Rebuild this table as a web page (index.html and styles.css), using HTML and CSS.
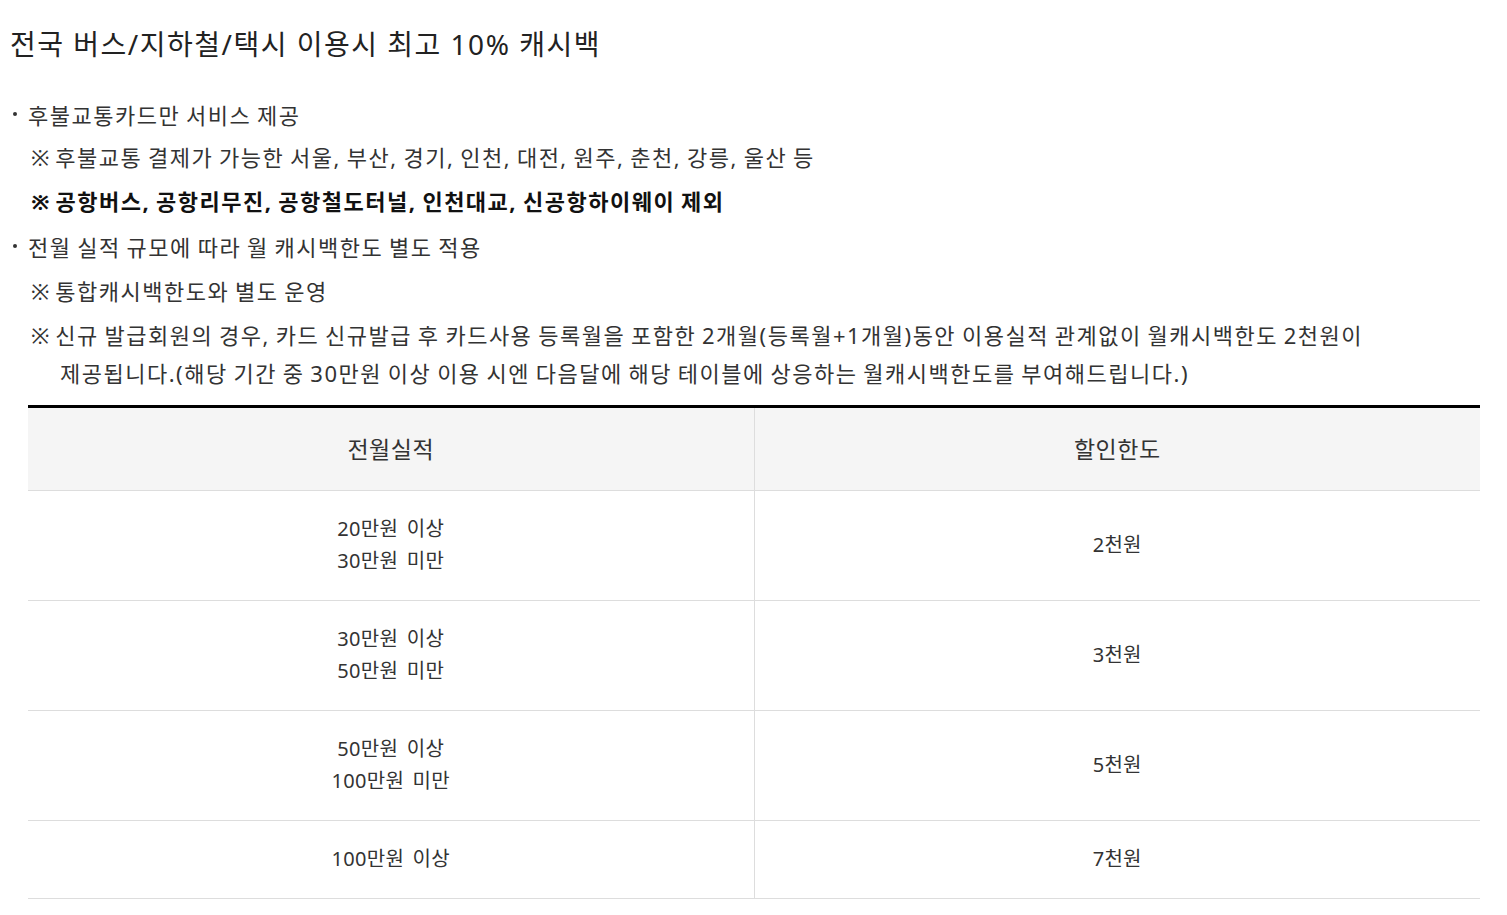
FILE: index.html
```html
<!DOCTYPE html>
<html lang="ko">
<head>
<meta charset="utf-8">
<link rel="stylesheet" href="styles.css">
</head>
<body>
<div class="page">
  <h2 class="title">전국 버스/지하철/택시 이용시 최고 10% 캐시백</h2>
  <ul class="list">
    <li class="item">
      <p class="line bullet first">후불교통카드만 서비스 제공</p>
      <p class="line note"><span class="mark">※</span> 후불교통 결제가 가능한 서울, 부산, 경기, 인천, 대전, 원주, 춘천, 강릉, 울산 등</p>
      <p class="line note strong"><span class="mark">※</span> 공항버스, 공항리무진, 공항철도터널, 인천대교, 신공항하이웨이 제외</p>
    </li>
    <li class="item next">
      <p class="line bullet">전월 실적 규모에 따라 월 캐시백한도 별도 적용</p>
      <p class="line note"><span class="mark">※</span> 통합캐시백한도와 별도 운영</p>
      <p class="line note hang"><span class="mark">※</span> 신규 발급회원의 경우, 카드 신규발급 후 카드사용 등록월을 포함한 2개월(등록월+1개월)동안 이용실적 관계없이 월캐시백한도 2천원이<br>제공됩니다.(해당 기간 중 30만원 이상 이용 시엔 다음달에 해당 테이블에 상응하는 월캐시백한도를 부여해드립니다.)</p>
    </li>
  </ul>
  <table class="tbl">
    <thead>
      <tr><th>전월실적</th><th>할인한도</th></tr>
    </thead>
    <tbody>
      <tr><td>20만원 이상<br>30만원 미만</td><td>2천원</td></tr>
      <tr><td>30만원 이상<br>50만원 미만</td><td>3천원</td></tr>
      <tr><td>50만원 이상<br>100만원 미만</td><td>5천원</td></tr>
      <tr><td>100만원 이상</td><td>7천원</td></tr>
    </tbody>
  </table>
</div>
</body>
</html>
```

FILE: styles.css
```css
* { box-sizing: border-box; }
html, body { margin: 0; padding: 0; background: #fff; }
body {
  font-family: "Noto Sans", "Noto Sans CJK KR", sans-serif;
  color: #333;
}
.page { padding: 26px 27px 0 10px; }
.title {
  margin: 0;
  font-size: 28px;
  font-weight: 400;
  line-height: 36px;
  color: #222;
  letter-spacing: 1.5px;
  word-spacing: 0;
}
.list { list-style: none; margin: 34px 0 0 0; padding: 0; }
.item { margin: 0; }
.item.next { margin-top: 8px; }
.line {
  margin: 0;
  font-size: 22px;
  line-height: 38px;
  letter-spacing: 1.5px;
  word-spacing: -1.4px;
  padding-left: 18px;
  position: relative;
  margin-bottom: 6px;
}
.line.first { margin-bottom: 4px; }
.bullet::before {
  content: "";
  position: absolute;
  left: 3px;
  top: 16px;
  width: 4px;
  height: 4px;
  border-radius: 50%;
  background: #333;
}
.note { padding-left: 21px; }
.mark { letter-spacing: 0; }
.strong { font-weight: 700; color: #111; letter-spacing: 1.5px; }
.hang { padding-left: 50px; text-indent: -29px; }
.tbl {
  margin: 13px 0 0 18px;
  width: calc(100% - 18px);
  border-collapse: collapse;
  table-layout: fixed;
  border-top: 3px solid #000;
}
.tbl th, .tbl td {
  font-size: 20px;
  font-weight: 400;
  line-height: 32px;
  letter-spacing: 0.3px;
  word-spacing: 3px;
  text-align: center;
  color: #333;
  border-bottom: 1px solid #ddd;
  border-left: 1px solid #ddd;
  padding: 22px 0 23px;
}
.tbl th { background: #f5f5f5; padding: 25px 0; font-size: 23px; letter-spacing: 0.5px; }
.tbl th:first-child, .tbl td:first-child { border-left: 0; }
```
